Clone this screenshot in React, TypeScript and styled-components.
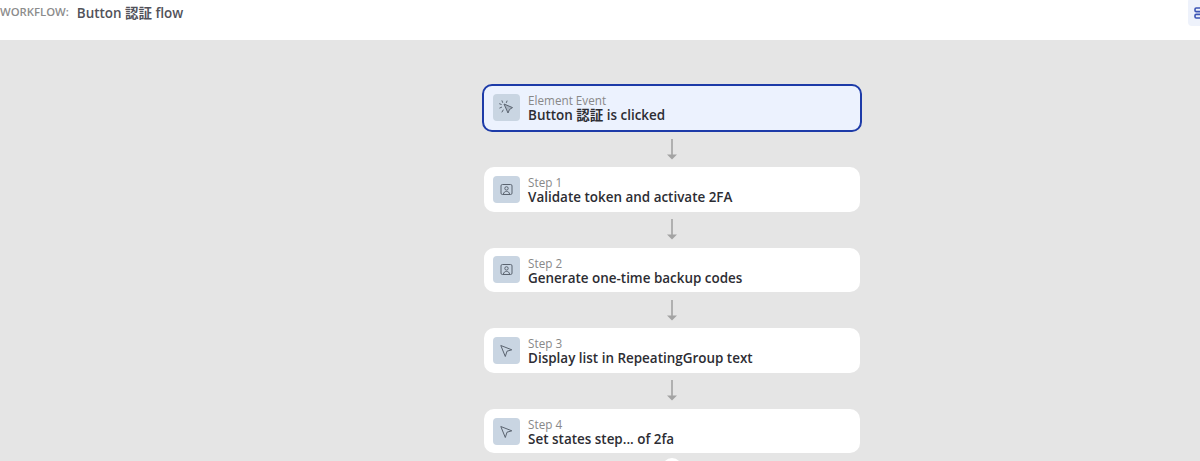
import React from "react";
import styled, { createGlobalStyle } from "styled-components";

const Global = createGlobalStyle`
  html, body { margin: 0; padding: 0; height: 100%; overflow: hidden; background: #e5e5e5; }
  #root { height: 100%; }
  * { box-sizing: border-box; }
`;

const Page = styled.div`
  display: flex;
  flex-direction: column;
  height: 461px;
  overflow: hidden;
  font-family: "Open Sans", "Noto Sans CJK JP", sans-serif;
`;

const Header = styled.header`
  flex: 0 0 39.5px;
  display: flex;
  align-items: flex-start;
  background: #fff;
  overflow: hidden;
`;

const Label = styled.span`
  margin-top: 4px;
  font-size: 11.3px;
  line-height: 15px;
  font-weight: 600;
  color: #8c8c8c;
`;

const Title = styled.h1`
  margin: 4px 0 0 8px;
  font-size: 13.45px;
  line-height: 18px;
  font-weight: 600;
  color: #52525a;
`;

const HeaderButton = styled.button`
  margin: -2px -14px 0 auto;
  flex: 0 0 26px;
  height: 28px;
  padding: 1px 0 0 6px;
  display: flex;
  align-items: center;
  border: 0;
  border-radius: 4px;
  background: #eef2fb;
  color: #3d55b5;
`;

const Canvas = styled.main`
  flex: 1;
  display: flex;
  flex-direction: column;
  align-items: center;
  padding: 44px 0 0 144px;
  background: #e5e5e5;
  overflow: hidden;
`;

const Card = styled.div<{ $selected?: boolean }>`
  flex: none;
  display: flex;
  align-items: center;
  gap: 8.6px;
  width: ${(p) => (p.$selected ? "380px" : "376px")};
  height: ${(p) => (p.$selected ? "48px" : "44.6px")};
  margin-bottom: ${(p) => (p.$selected ? "-0.5px" : "0")};
  padding-left: 8.5px;
  background: ${(p) => (p.$selected ? "#ecf2fe" : "#fff")};
  border: ${(p) => (p.$selected ? "2px solid #1d3ba8" : "0")};
  border-radius: 10px;
`;

const IconBox = styled.div`
  flex: 0 0 27px;
  height: 27px;
  display: flex;
  align-items: center;
  justify-content: center;
  border-radius: 4px;
  background: #c9d5e2;
  color: #5b6470;
`;

const Texts = styled.div`
  display: flex;
  flex-direction: column;
  min-width: 0;
  padding: 2px 0 0.6px;
`;

const Kicker = styled.span`
  font-size: 11.7px;
  line-height: 14px;
  font-weight: 400;
  color: #888;
`;

const Name = styled.span`
  font-size: 13.45px;
  line-height: 16px;
  font-weight: 600;
  color: #2d2d33;
`;

const Connector = styled.div`
  flex: 0 0 36px;
  height: 36px;
  display: flex;
  align-items: center;
  justify-content: center;
  color: #a3a3a3;
`;

const AddDot = styled.div`
  flex: none;
  width: 20px;
  height: 20px;
  margin-top: 5px;
  border-radius: 50%;
  background: #fff;
`;

const ArrowDown = () => (
  <svg width="12" height="21" viewBox="0 0 12 21" fill="currentColor" aria-hidden="true">
    <rect x="5.2" y="0" width="1.6" height="17" />
    <path d="M1 15.5h10L6 20.5z" />
  </svg>
);

const CursorClick = () => (
  <svg width="15" height="15" viewBox="0 0 15 15" fill="none" stroke="currentColor" strokeWidth="1" aria-hidden="true">
    <path d="M5 4l8.5 3.6-3 1.9L9 13z" fill="currentColor" fillOpacity=".3" strokeLinejoin="round" />
    <path d="M3 .8l.6 1.6M.6 3.8l1.6.6M.8 8l1.8-.8M3 12l1.2-2M8 1l-.6 1.5" strokeLinecap="round" />
  </svg>
);

const Person = () => (
  <svg width="13" height="13" viewBox="0 0 13 13" fill="none" stroke="currentColor" strokeWidth="1" aria-hidden="true">
    <rect x="1" y="1.5" width="11" height="10" rx="1.4" />
    <circle cx="6.5" cy="5.4" r="1.7" />
    <path d="M3.4 11.2c.3-1.9 1.5-2.8 3.1-2.8s2.8.9 3.1 2.8" />
  </svg>
);

const Pointer = () => (
  <svg width="15" height="15" viewBox="0 0 15 15" fill="none" stroke="currentColor" strokeWidth="1" strokeLinejoin="round" aria-hidden="true">
    <path d="M1.8 2.5l11 4.3-4.8 1.4-1.7 5.3z" />
  </svg>
);

const steps = [
  { kicker: "Step 1", name: "Validate token and activate 2FA", icon: <Person /> },
  { kicker: "Step 2", name: "Generate one-time backup codes", icon: <Person /> },
  { kicker: "Step 3", name: "Display list in RepeatingGroup text", icon: <Pointer /> },
  { kicker: "Step 4", name: "Set states step... of 2fa", icon: <Pointer /> },
];

export default function App() {
  return (
    <Page>
      <Global />
      <Header>
        <Label>WORKFLOW:</Label>
        <Title>Button 認証 flow</Title>
        <HeaderButton aria-label="Layout">
          <svg width="16" height="12" viewBox="0 0 16 12" fill="none" stroke="currentColor" strokeWidth="1.6" aria-hidden="true">
            <rect x="1" y="1" width="14" height="3.6" rx="1.2" />
            <rect x="1" y="7.4" width="14" height="3.6" rx="1.2" />
          </svg>
        </HeaderButton>
      </Header>
      <Canvas>
        <Card $selected>
          <IconBox><CursorClick /></IconBox>
          <Texts>
            <Kicker>Element Event</Kicker>
            <Name>Button 認証 is clicked</Name>
          </Texts>
        </Card>
        {steps.map((s) => (
          <React.Fragment key={s.kicker}>
            <Connector><ArrowDown /></Connector>
            <Card>
              <IconBox>{s.icon}</IconBox>
              <Texts>
                <Kicker>{s.kicker}</Kicker>
                <Name>{s.name}</Name>
              </Texts>
            </Card>
          </React.Fragment>
        ))}
        <AddDot />
      </Canvas>
    </Page>
  );
}
